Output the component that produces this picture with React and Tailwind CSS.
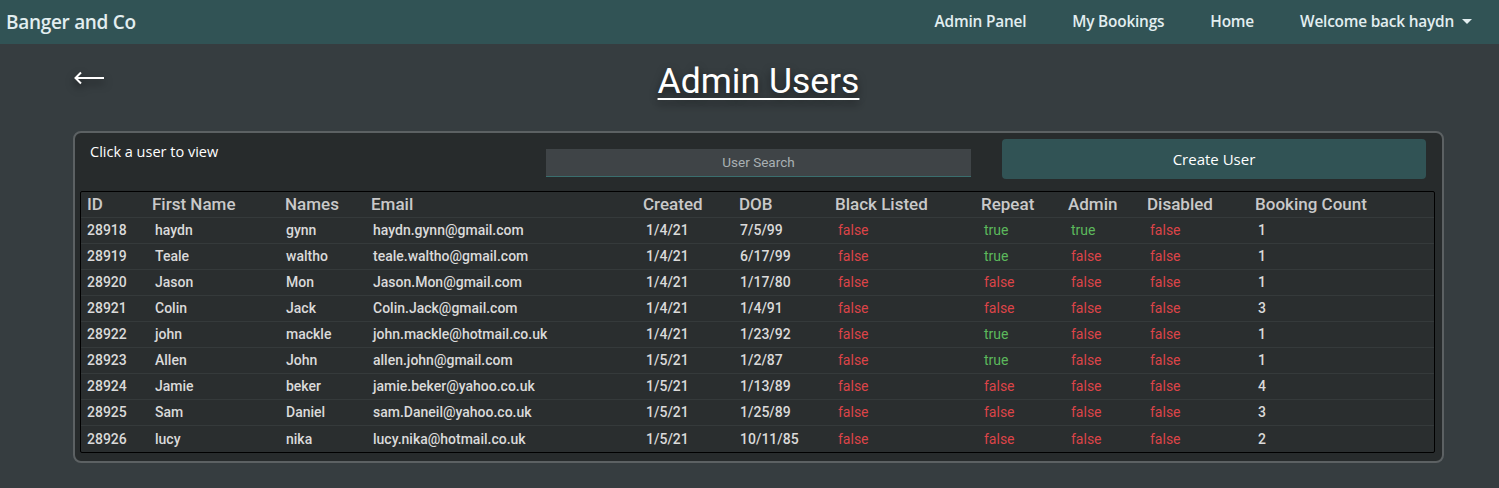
import React from "react";

const users = [
  ["28918", "haydn", "gynn", "haydn.gynn@gmail.com", "1/4/21", "7/5/99", false, true, true, false, 1],
  ["28919", "Teale", "waltho", "teale.waltho@gmail.com", "1/4/21", "6/17/99", false, true, false, false, 1],
  ["28920", "Jason", "Mon", "Jason.Mon@gmail.com", "1/4/21", "1/17/80", false, false, false, false, 1],
  ["28921", "Colin", "Jack", "Colin.Jack@gmail.com", "1/4/21", "1/4/91", false, false, false, false, 3],
  ["28922", "john", "mackle", "john.mackle@hotmail.co.uk", "1/4/21", "1/23/92", false, true, false, false, 1],
  ["28923", "Allen", "John", "allen.john@gmail.com", "1/5/21", "1/2/87", false, true, false, false, 1],
  ["28924", "Jamie", "beker", "jamie.beker@yahoo.co.uk", "1/5/21", "1/13/89", false, false, false, false, 4],
  ["28925", "Sam", "Daniel", "sam.Daneil@yahoo.co.uk", "1/5/21", "1/25/89", false, false, false, false, 3],
  ["28926", "lucy", "nika", "lucy.nika@hotmail.co.uk", "1/5/21", "10/11/85", false, false, false, false, 2],
];

const headers = ["ID", "First Name", "Names", "Email", "Created", "DOB", "Black Listed", "Repeat", "Admin", "Disabled", "Booking Count"];

const grid = "grid grid-cols-[65px_133px_86px_272px_96px_96px_146px_87px_79px_108px_1fr]";

function Bool({ v }) {
  return (
    <div className={"pl-[9px] font-normal " + (v ? "text-[#5cb85c]" : "text-[#dc4448]")}>{v ? "true" : "false"}</div>
  );
}

export default function App() {
  return (
    <div className="min-h-[488px] bg-[#363d40] font-['Roboto',sans-serif]">
      <nav className="h-[44px] bg-[#315355] flex items-center justify-between pl-[6px] pr-[27px] font-['Open_Sans',sans-serif] text-[#e2eef0]">
        <div className="text-[19px] font-semibold tracking-[-0.3px]">Banger and Co</div>
        <div className="flex items-center text-[15.4px] font-semibold tracking-[-0.2px]">
          <span className="mr-[46px]">Admin Panel</span>
          <span className="mr-[46px]">My Bookings</span>
          <span className="mr-[46px]">Home</span>
          <span className="flex items-center">
            Welcome back haydn
            <span className="ml-[8px] w-0 h-0 border-l-[5px] border-r-[5px] border-t-[5px] border-l-transparent border-r-transparent border-t-[#e2eef0]"></span>
          </span>
        </div>
      </nav>

      <div className="relative h-[87px] flex items-center justify-center">
        <svg className="absolute left-[74px] top-[27px] [filter:drop-shadow(0_4px_4px_rgba(0,0,0,0.6))]" width="32" height="14" viewBox="0 0 32 14" fill="none">
          <path d="M2 7 H30" stroke="white" strokeWidth="2" />
          <path d="M7 1.5 L1.5 7 L7 12.5" stroke="white" strokeWidth="2" strokeLinejoin="miter" />
        </svg>
        <h1 className="ml-[18px] mt-[-12px] text-[35.5px] text-white underline decoration-[2px] underline-offset-[5px] [text-shadow:0_4px_8px_rgba(0,0,0,0.6)]">Admin Users</h1>
      </div>

      <div className="ml-[73px] mr-[55px] border-2 border-[#5c6163] rounded-[8px] bg-[#272b2c] pt-[6px] pl-[5px] pr-[7px] pb-[8px]">
        <div className="flex items-start h-[52px]">
          <div className="w-[466px] pl-[10px] pt-[2px] text-[14.5px] text-white font-['Open_Sans',sans-serif]">Click a user to view</div>
          <div className="w-[425px] mt-[10px] h-[28px] bg-[#3f4447] border-b border-[#3a6e6e] flex items-center justify-center text-[13.5px] text-[#a9b0b3]">User Search</div>
          <div className="ml-[31px] w-[424px] h-[40px] bg-[#315355] rounded-[4px] flex items-center justify-center text-[15px] text-white font-['Open_Sans',sans-serif]">Create User</div>
        </div>
        <div className="border border-black rounded-[2px] bg-[#2a2e2f] text-[14px]">
          <div className={grid + " h-[26px] items-center border-b border-[#353a3b] text-[17px] font-medium text-[#c9c9c9]"}>
            {headers.map((h) => (
              <div key={h} className="pl-[6px]">{h}</div>
            ))}
          </div>
          {users.map((u, i) => (
            <div key={u[0]} className={grid + " h-[26px] items-center font-medium text-[#dadada] " + (i < users.length - 1 ? "border-b border-[#353a3b]" : "")}>
              <div className="pl-[6px]">{u[0]}</div>
              <div className="pl-[9px]">{u[1]}</div>
              <div className="pl-[7px]">{u[2]}</div>
              <div className="pl-[8px]">{u[3]}</div>
              <div className="pl-[9px]">{u[4]}</div>
              <div className="pl-[7px]">{u[5]}</div>
              <Bool v={u[6]} />
              <Bool v={u[7]} />
              <Bool v={u[8]} />
              <Bool v={u[9]} />
              <div className="pl-[9px]">{u[10]}</div>
            </div>
          ))}
        </div>
      </div>
    </div>
  );
}
